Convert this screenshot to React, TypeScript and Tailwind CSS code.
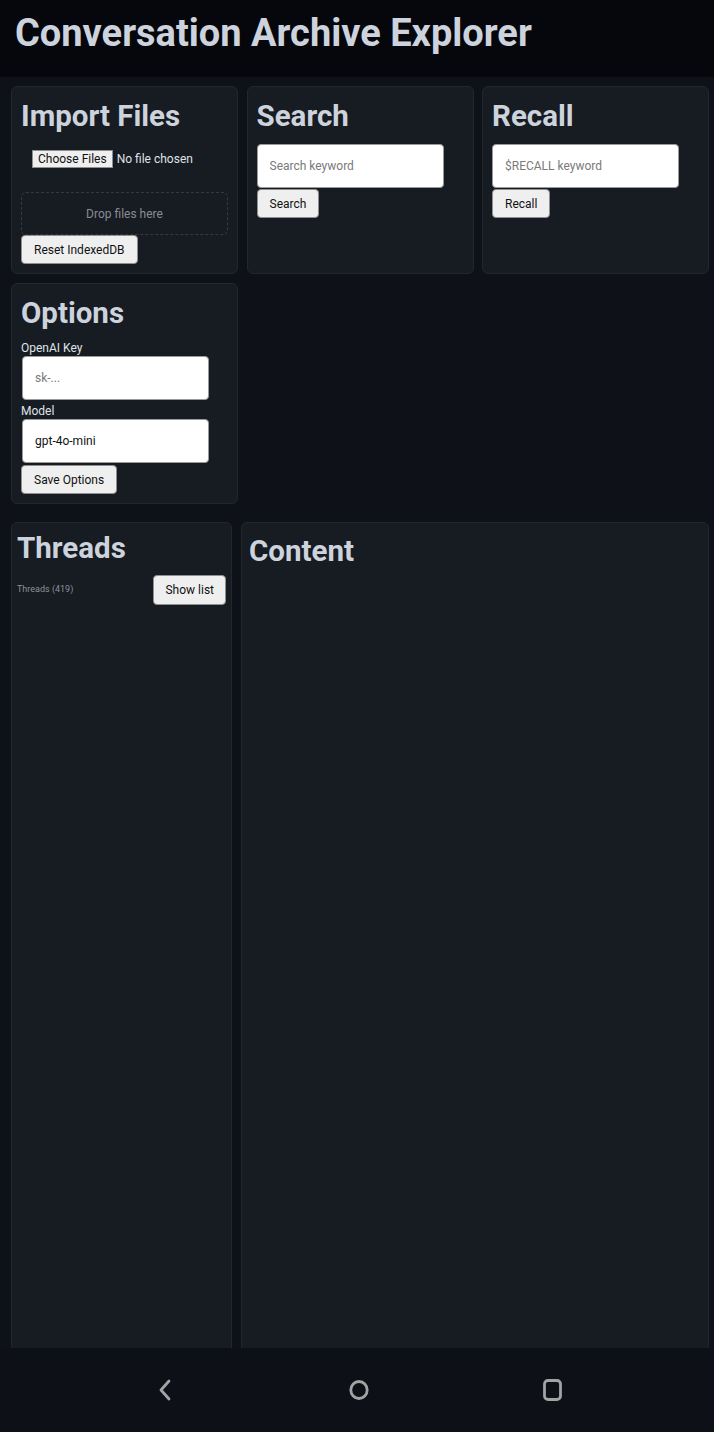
import React from "react";

const btn =
  "h-[29px] rounded-[4px] border border-[#8f8f8f] bg-[#efefef] px-3 text-[12px] text-[#111] leading-none";
const inputCls =
  "block h-[44px] w-[187px] rounded-[4px] border border-[#9a9a9a] bg-white px-3 text-[12px] text-[#111] placeholder:text-[#7a7a7a] outline-none";

const Card: React.FC<{ className?: string; children: React.ReactNode }> = ({ className = "", children }) => (
  <section className={`rounded-[6px] border border-[#22272e] bg-[#171b22] ${className}`}>{children}</section>
);

const Heading: React.FC<{ children: React.ReactNode; className?: string }> = ({ children, className = "" }) => (
  <h2 className={`text-[29.5px] font-bold leading-[36px] text-[#cdd3dc] ${className}`}>{children}</h2>
);

export default function App() {
  return (
    <div className="flex h-[1432px] flex-col overflow-hidden bg-[#0e1118] font-['Roboto',sans-serif]">
      <header className="flex h-[77px] shrink-0 items-start bg-[#05070c] pl-[15px] pt-[11px]">
        <h1 className="text-[38px] font-bold leading-[44px] text-[#cdd3dc]">Conversation Archive Explorer</h1>
      </header>

      <main className="flex min-h-0 flex-1 flex-col overflow-hidden pl-[11px] pt-[9px]">
        <div className="grid w-[698px] grid-cols-3 gap-x-[8.5px] gap-y-[9px]">
          <Card className="h-[188px] px-[9px] pt-[11px]">
            <Heading>Import Files</Heading>
            <div className="mt-[16px] flex items-center pl-[11px] text-[12px] leading-none">
              <span className="flex h-[18px] items-center border border-[#8f8f8f] bg-[#efefef] px-[5px] text-[#111]">
                Choose Files
              </span>
              <span className="ml-[4px] text-[#dfe3e8]">No file chosen</span>
            </div>
            <div className="mt-[24px] flex h-[43px] items-center justify-center rounded-[5px] border border-dashed border-[#343a43] text-[12px] text-[#878d95]">
              Drop files here
            </div>
            <button className={`${btn} px-[12px]`}>Reset IndexedDB</button>
          </Card>

          <Card className="h-[188px] px-[9px] pt-[11px]">
            <Heading>Search</Heading>
            <input className={`${inputCls} mt-[10px]`} placeholder="Search keyword" />
            <button className={`${btn} mt-[1px] px-[12px]`}>Search</button>
          </Card>

          <Card className="h-[188px] px-[9px] pt-[11px]">
            <Heading>Recall</Heading>
            <input className={`${inputCls} mt-[10px]`} placeholder="$RECALL keyword" />
            <button className={`${btn} mt-[1px] px-[12px]`}>Recall</button>
          </Card>

          <Card className="h-[221px] px-[9px] pt-[11px]">
            <Heading>Options</Heading>
            <label className="mt-[10px] block text-[12px] leading-[15px] text-[#dfe3e8]">OpenAI Key</label>
            <input className={`${inputCls} ml-px`} placeholder="sk-..." />
            <label className="mt-[3px] block text-[12px] leading-[16px] text-[#dfe3e8]">Model</label>
            <input className={`${inputCls} ml-px`} defaultValue="gpt-4o-mini" />
            <button className={`${btn} mt-[2px]`}>Save Options</button>
          </Card>
        </div>

        <div className="mt-[18px] flex min-h-0 flex-1 gap-[9px]">
          <Card className="h-[900px] w-[221px] shrink-0 px-[5px] pt-[7px]">
            <Heading>Threads</Heading>
            <div className="mt-[9px] flex items-center justify-between">
              <span className="text-[9px] text-[#8b9199]">Threads (419)</span>
              <button className={`${btn} h-[30px] px-[11px]`}>Show list</button>
            </div>
          </Card>
          <Card className="h-[900px] w-[468px] shrink-0 px-[7px] pt-[10px]">
            <Heading>Content</Heading>
          </Card>
        </div>
      </main>

      <nav className="flex h-[84px] shrink-0 items-center bg-[#0d1017] text-[#a3a3a3]">
        <div className="flex w-full items-center justify-center gap-[170px] pl-[6px]">
          <svg width="22" height="24" viewBox="0 0 22 24" fill="none" stroke="currentColor" strokeWidth="2.8" strokeLinecap="round" strokeLinejoin="round">
            <path d="M14 3 L6 12 L14 21" />
          </svg>
          <svg width="24" height="24" viewBox="0 0 24 24" fill="none" stroke="currentColor" strokeWidth="2.8">
            <ellipse cx="12" cy="12" rx="8.2" ry="8.5" />
          </svg>
          <svg width="24" height="24" viewBox="0 0 24 24" fill="none" stroke="currentColor" strokeWidth="2.8">
            <rect x="3.5" y="2.5" width="16" height="19" rx="3.5" />
          </svg>
        </div>
      </nav>
    </div>
  );
}
